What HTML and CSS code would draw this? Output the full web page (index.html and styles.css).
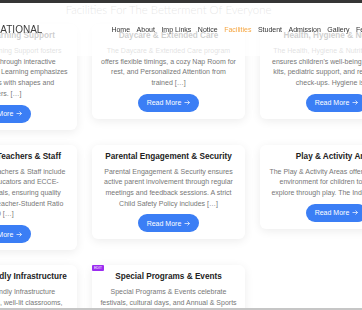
FILE: index.html
```html
<!DOCTYPE html>
<html lang="en">
<head>
    <meta charset="UTF-8">
    <meta name="viewport" content="width=device-width, initial-scale=1.0">
    <title>Facilities</title>
    <link rel="stylesheet" href="styles.css">
</head>
<body>
    <header class="site-header">
        <div class="top-strip"></div>
        <div class="header-bar">
            <div class="header-inner">
                <a class="logo" href="#">EDUCATIONAL</a>
                <nav class="main-nav">
                    <a href="#">Home</a>
                    <a href="#">About</a>
                    <a href="#">Imp Links</a>
                    <a href="#">Notice</a>
                    <a href="#" class="active">Facilities</a>
                    <a href="#">Student</a>
                    <a href="#">Admission</a>
                    <a href="#">Gallery</a>
                    <a href="#">Fees</a>
                </nav>
            </div>
        </div>
    </header>

    <main class="page">
        <section class="facilities">
            <h2 class="section-title">Facilities For The Betterment Of Everyone</h2>

            <div class="card-grid">
                <article class="card">
                    <h3>Individual Learning Support</h3>
                    <p>Our Individual Learning Support fosters cognitive growth through interactive activities. Play-based Learning emphasizes hands-on puzzles with shapes and numbers. [&hellip;]</p>
                    <a class="read-more" href="#">Read More <svg width="6" height="5" viewBox="0 0 12 10"><path d="M1 5h10M7 1l4 4-4 4" fill="none" stroke="#fff" stroke-width="1.4"/></svg></a>
                </article>

                <article class="card">
                    <h3>Daycare &amp; Extended Care</h3>
                    <p>The Daycare &amp; Extended Care program offers flexible timings, a cozy Nap Room for rest, and Personalized Attention from trained [&hellip;]</p>
                    <a class="read-more" href="#">Read More <svg width="6" height="5" viewBox="0 0 12 10"><path d="M1 5h10M7 1l4 4-4 4" fill="none" stroke="#fff" stroke-width="1.4"/></svg></a>
                </article>

                <article class="card">
                    <h3>Health, Hygiene &amp; Nutrition</h3>
                    <p>The Health, Hygiene &amp; Nutrition program ensures children's well-being with first-aid kits, pediatric support, and regular health check-ups. Hygiene is [&hellip;]</p>
                    <a class="read-more" href="#">Read More <svg width="6" height="5" viewBox="0 0 12 10"><path d="M1 5h10M7 1l4 4-4 4" fill="none" stroke="#fff" stroke-width="1.4"/></svg></a>
                </article>

                <article class="card">
                    <h3>Well-Qualified Teachers &amp; Staff</h3>
                    <p>Our Experienced Teachers &amp; Staff include highly qualified educators and ECCE-certified professionals, ensuring quality through a healthy Teacher-Student Ratio 1:10 [&hellip;]</p>
                    <a class="read-more" href="#">Read More <svg width="6" height="5" viewBox="0 0 12 10"><path d="M1 5h10M7 1l4 4-4 4" fill="none" stroke="#fff" stroke-width="1.4"/></svg></a>
                </article>

                <article class="card">
                    <h3>Parental Engagement &amp; Security</h3>
                    <p>Parental Engagement &amp; Security ensures active parent involvement through regular meetings and feedback sessions. A strict Child Safety Policy includes [&hellip;]</p>
                    <a class="read-more" href="#">Read More <svg width="6" height="5" viewBox="0 0 12 10"><path d="M1 5h10M7 1l4 4-4 4" fill="none" stroke="#fff" stroke-width="1.4"/></svg></a>
                </article>

                <article class="card">
                    <h3>Play &amp; Activity Areas</h3>
                    <p>The Play &amp; Activity Areas offer a safe, open environment for children to learn and explore through play. The Indoor Gym [&hellip;]</p>
                    <a class="read-more" href="#">Read More <svg width="6" height="5" viewBox="0 0 12 10"><path d="M1 5h10M7 1l4 4-4 4" fill="none" stroke="#fff" stroke-width="1.4"/></svg></a>
                </article>

                <article class="card">
                    <h3>Safe, Child-Friendly Infrastructure</h3>
                    <p>Safe &amp; Child-Friendly Infrastructure comprises spacious, well-lit classrooms, secure play zones and clean washrooms [&hellip;]</p>
                    <a class="read-more" href="#">Read More <svg width="6" height="5" viewBox="0 0 12 10"><path d="M1 5h10M7 1l4 4-4 4" fill="none" stroke="#fff" stroke-width="1.4"/></svg></a>
                </article>

                <article class="card">
                    <span class="edit-badge">EDIT</span>
                    <h3>Special Programs &amp; Events</h3>
                    <p>Special Programs &amp; Events celebrate festivals, cultural days, and Annual &amp; Sports Day with active participation of every child [&hellip;]</p>
                    <a class="read-more" href="#">Read More <svg width="6" height="5" viewBox="0 0 12 10"><path d="M1 5h10M7 1l4 4-4 4" fill="none" stroke="#fff" stroke-width="1.4"/></svg></a>
                </article>
            </div>
        </section>
    </main>

    <div class="window-edge"></div>
</body>
</html>
```

FILE: styles.css
```css
body {
    margin: 0;
    font-family: 'Liberation Sans', Arial, sans-serif;
    color: #333;
    background-color: #fff;
    overflow: hidden;
}

.site-header {
    position: fixed;
    top: 0;
    left: 0;
    right: 0;
    z-index: 10;
}

.top-strip {
    height: 3px;
    background-color: #353535;
}

.header-bar {
    height: 53px;
    display: flex;
    align-items: center;
    background-color: rgba(255, 255, 255, 0.78);
}

.header-inner {
    display: flex;
    align-items: center;
    margin-left: -28px;
    white-space: nowrap;
}

.logo {
    font-size: 10px;
    color: #3c3c3c;
    text-decoration: none;
}

.main-nav {
    display: flex;
    gap: 6.5px;
    margin-left: 69px;
}

.main-nav a {
    font-size: 7px;
    color: #333;
    text-decoration: none;
}

.main-nav a.active {
    color: #f5a540;
}

.page {
    padding-top: 3px;
}

.facilities {
    width: 489px;
    margin-left: -76px;
}

.section-title {
    margin: 0 0 7px;
    font-family: Lato, 'Liberation Sans', sans-serif;
    font-weight: 300;
    font-size: 11.4px;
    line-height: 14px;
    text-align: center;
    color: #8c8c8c;
}

.card-grid {
    display: grid;
    grid-template-columns: repeat(3, 153px);
    gap: 15px;
    align-items: start;
}

.card {
    position: relative;
    background: white;
    padding: 6px 7.5px 7px;
    border-radius: 6px;
    box-shadow: 0 2px 10px rgba(0, 0, 0, 0.08);
    text-align: center;
}

.card h3 {
    margin: 0 0 4px;
    font-size: 8.2px;
    line-height: 12px;
    color: #222;
}

.card p {
    margin: 0 0 5px;
    font-size: 7px;
    line-height: 10.7px;
    color: #777;
}

.read-more {
    display: flex;
    align-items: center;
    justify-content: center;
    gap: 3px;
    width: 61px;
    height: 18px;
    margin: 0 auto;
    border-radius: 9px;
    background-color: #3b7ef5;
    color: white;
    font-size: 7px;
    text-decoration: none;
}

.edit-badge {
    position: absolute;
    top: 0;
    left: 0;
    width: 12px;
    height: 6px;
    border-radius: 1px;
    background-color: #9b2cf0;
    color: white;
    font-size: 3.5px;
    line-height: 6px;
    text-align: center;
}

.window-edge {
    position: fixed;
    left: 0;
    right: 0;
    bottom: 0;
    height: 2px;
    background-color: #c6c6c6;
}
```
